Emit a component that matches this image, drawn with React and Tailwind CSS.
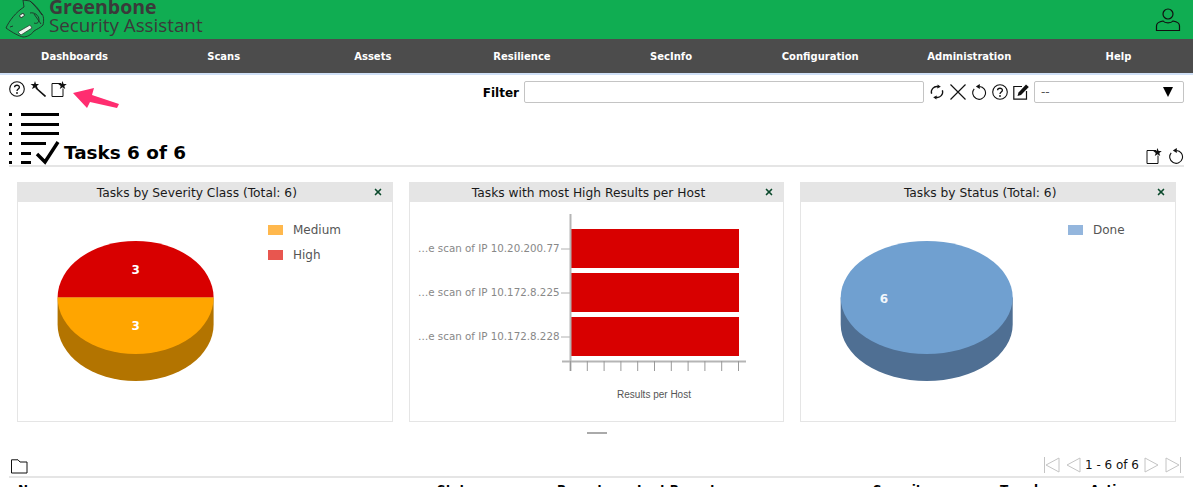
import React from 'react';
import { X } from 'lucide-react';

const NAV = ['Dashboards', 'Scans', 'Assets', 'Resilience', 'SecInfo', 'Configuration', 'Administration', 'Help'];

function Logo() {
  return (
    <svg width="46" height="39" viewBox="0 0 46 39" className="shrink-0" fill="none" stroke="#1f2f27" strokeWidth="0.9">
      <path d="M3 28 C6 21 13 12 21 7 L20 0 L27 1 C31 4 35 8 38 13 C41 15 41 21 40 25 C37 28 34 29 31 31 C28 35 24 37 20 37 C16 36 10 33 3 28 Z" fill="#17aa55" />
      <path d="M27 1 C31 5 35 9 39 15" />
      <path d="M27 13 C31 12 36 15 36 20 C36 23 33 24 31 23 M31 14 L38 24" />
      <ellipse cx="19" cy="15.5" rx="2.5" ry="1.6" transform="rotate(-35 19 15.5)" fill="#eef6ef" />
      <path d="M15 32 L27 25 L29 28 L18 35 Z" fill="#eef6ef" strokeWidth="0.7" />
      <path d="M7 27 L10 26" />
    </svg>
  );
}

function UserIcon() {
  return (
    <svg width="26" height="26" viewBox="0 0 26 26" fill="none" stroke="#111" strokeWidth="1.2">
      <circle cx="13" cy="8" r="5" />
      <path d="M1.5 24.5 V20 C1.5 17 5 15.5 8 15 C10 17.5 16 17.5 18 15 C21 15.5 24.5 17 24.5 20 V24.5 Z" />
    </svg>
  );
}

function HelpIcon() {
  return (
    <svg width="16" height="16" viewBox="0 0 16 16" fill="none" stroke="#111" strokeWidth="1.1">
      <circle cx="8" cy="8" r="7.3" />
      <path d="M5.6 6.2 C5.6 3.6 10.4 3.6 10.4 6.2 C10.4 8 8 8 8 10" strokeWidth="1.3" />
      <circle cx="8" cy="12" r="0.9" fill="#111" stroke="none" />
    </svg>
  );
}

function WandIcon() {
  return (
    <svg width="16" height="16" viewBox="0 0 16 16">
      <path d="M6 7 L15.5 15.5" stroke="#111" strokeWidth="1.6" />
      <path d="M5 0 L6 3 L9 3 L6.8 5 L8 8 L5 6.4 L2 8 L3.2 5 L0.5 3 L4 3 Z" fill="#111" />
    </svg>
  );
}

function NewIcon() {
  return (
    <svg width="16" height="16" viewBox="0 0 16 16" fill="none">
      <path d="M10 2.5 H1 V15.5 H12 V7.5" stroke="#111" strokeWidth="1" />
      <path d="M11.5 0 L12.6 3 L15.8 3 L13.3 5 L14.2 8 L11.5 6.2 L8.8 8 L9.7 5 L7.2 3 L10.4 3 Z" fill="#111" />
    </svg>
  );
}

function SyncIcon() {
  return (
    <svg width="16" height="16" viewBox="0 0 16 16" fill="none" stroke="#111" strokeWidth="1.3">
      <path d="M2.6 9.8 A5.6 5.6 0 0 1 9 2.6" />
      <path d="M13.4 6.2 A5.6 5.6 0 0 1 7 13.4" />
      <path d="M8.6 0.4 L11.8 2.8 L8.2 4.6 Z" fill="#111" stroke="none" />
      <path d="M7.4 15.6 L4.2 13.2 L7.8 11.4 Z" fill="#111" stroke="none" />
    </svg>
  );
}

function CrossIcon() {
  return (
    <svg width="16" height="16" viewBox="0 0 16 16" stroke="#111" strokeWidth="1.2">
      <path d="M0.5 0.5 L15.5 15.5 M15.5 0.5 L0.5 15.5" />
    </svg>
  );
}

function ResetIcon() {
  return (
    <svg width="16" height="16" viewBox="0 0 16 16" fill="none" stroke="#111" strokeWidth="1.1">
      <path d="M8.5 2.5 A6.4 6.4 0 1 1 3.2 4.8" />
      <path d="M8.8 0 L8.8 5 L4.8 2.4 Z" fill="#111" stroke="none" />
    </svg>
  );
}

function EditIcon() {
  return (
    <svg width="16" height="16" viewBox="0 0 16 16" fill="none">
      <path d="M9 2.5 H0.8 V15.2 H13.5 V7" stroke="#111" strokeWidth="1.2" />
      <path d="M13 0.5 L15.8 3 L8 11 L4.5 12 L5.5 8.5 Z" fill="#111" />
    </svg>
  );
}

function TasksIcon() {
  return (
    <svg width="52" height="53" viewBox="0 0 52 53" className="shrink-0" fill="#000">
      <rect x="0" y="1" width="3" height="3" />
      <rect x="0" y="11" width="3" height="3" />
      <rect x="0" y="20" width="3" height="3" />
      <rect x="0" y="30" width="3" height="3" />
      <rect x="0" y="40" width="3" height="3" />
      <rect x="0" y="49" width="3" height="3" />
      <rect x="12" y="1" width="38" height="3" />
      <rect x="12" y="11" width="38" height="3" />
      <rect x="12" y="20" width="38" height="3" />
      <rect x="12" y="30" width="25" height="3" />
      <rect x="12" y="40" width="10" height="3" />
      <rect x="12" y="49" width="10" height="3" />
      <path d="M28 42 L36 50 L49 30" fill="none" stroke="#000" strokeWidth="3.4" />
    </svg>
  );
}

function FolderIcon() {
  return (
    <svg width="17" height="15" viewBox="0 0 17 15" fill="none" stroke="#111" strokeWidth="1">
      <path d="M0.5 14 V0.8 H7 L9 3 H16 V14 Z" />
    </svg>
  );
}

function PageArrow({ dir, bar, className }) {
  return (
    <svg width="16" height="16" viewBox="0 0 16 16" fill="none" stroke="#c4c4c4" strokeWidth="1" className={className}>
      {dir === 'left' ? <path d="M15 1 L2 8 L15 15 Z" /> : <path d="M1 1 L14 8 L1 15 Z" />}
      {bar && (dir === 'left' ? <path d="M0.5 0 V16" /> : <path d="M15.5 0 V16" />)}
    </svg>
  );
}

function Pie({ cx, rx, top, side, label }) {
  const cy = 95.5;
  const ry = 56.5;
  const d = 27;
  return (
    <g>
      <path d={`M${cx - rx} ${cy} V${cy + d} A${rx} ${ry} 0 0 0 ${cx + rx} ${cy + d} V${cy} Z`} fill={side} />
      {top}
      {label}
    </g>
  );
}

function Panel({ title, children }) {
  return (
    <div className="relative h-[240px] border border-[#e5e5e5] bg-white">
      <div className="relative h-[19px] bg-[#e5e5e5] pr-[16px] pt-[1px] text-center text-[12.25px] leading-[19px] text-[#1a1a1a]">
        {title}
        <X size={10} strokeWidth={4} className="absolute right-[9px] top-[4px] text-[#0b4a2c]" />
      </div>
      {children}
    </div>
  );
}

function Legend({ x, color, y, children }) {
  return (
    <g>
      <rect x={x} y={y} width="15" height="10" fill={color} />
      <text x={x + 25} y={y + 8.5} fontSize="12" fill="#555">{children}</text>
    </g>
  );
}

function SeverityChart() {
  const cx = 117.6;
  const rx = 78;
  const top = (
    <g>
      <path d={`M${cx - rx} 95.5 A${rx} 56.5 0 0 1 ${cx + rx} 95.5 Z`} fill="#d80000" />
      <path d={`M${cx - rx} 95.5 A${rx} 56.5 0 0 0 ${cx + rx} 95.5 Z`} fill="#ffa500" />
    </g>
  );
  const label = (
    <g fontSize="12" fontWeight="700" fill="#fff" textAnchor="middle">
      <text x={cx} y="72">3</text>
      <text x={cx} y="128">3</text>
    </g>
  );
  return (
    <svg width="374" height="219" viewBox="0 0 374 219" className="block">
      <Pie cx={cx} rx={rx} side="#b37400" top={top} label={label} />
      <Legend x={250} y={23} color="#ffb84d">Medium</Legend>
      <Legend x={250} y={48} color="#e8564f">High</Legend>
    </svg>
  );
}

function StatusChart() {
  const cx = 125.7;
  const rx = 86;
  const top = <ellipse cx={cx} cy="95.5" rx={rx} ry="56.5" fill="#70a0d0" />;
  const label = <text x="83" y="100.5" fontSize="12" fontWeight="700" fill="#f2f6fb" textAnchor="middle">6</text>;
  return (
    <svg width="374" height="219" viewBox="0 0 374 219" className="block">
      <Pie cx={cx} rx={rx} side="#4f6f93" top={top} label={label} />
      <Legend x={267} y={23} color="#94b6dd">Done</Legend>
    </svg>
  );
}

function BarsChart() {
  const rows = [
    { y: 27, label: '…e scan of IP 10.20.200.77' },
    { y: 71, label: '…e scan of IP 10.172.8.225' },
    { y: 115, label: '…e scan of IP 10.172.8.228' },
  ];
  const ticks = Array.from({ length: 11 }, (_, i) => 160.5 + i * 16.8);
  return (
    <svg width="374" height="219" viewBox="0 0 374 219" className="block">
      {rows.map((r) => (
        <g key={r.y}>
          <rect x="161" y={r.y} width="168" height="39" fill="#d80000" />
          <path d={`M151 ${r.y + 20} H160`} stroke="#b0b0b0" strokeWidth="1" />
          <text x="149.5" y={r.y + 23} fontSize="10.3" fill="#888" textAnchor="end">{r.label}</text>
        </g>
      ))}
      <path d="M160.5 12 V169" stroke="#b5b5b5" strokeWidth="2" />
      <path d="M152 159.5 H336" stroke="#b5b5b5" strokeWidth="2" />
      {ticks.map((x) => (
        <path key={x} d={`M${x} 159 V169`} stroke="#999" strokeWidth="1" />
      ))}
      <text x="244" y="196" fontSize="10" fill="#555" textAnchor="middle" fontFamily="'Liberation Sans', sans-serif">Results per Host</text>
    </svg>
  );
}

export default function App() {
  return (
    <div className="relative h-[487px] w-[1193px] overflow-hidden bg-white font-['DejaVu_Sans',sans-serif] text-black">
      <header className="flex h-[39px] items-start justify-between overflow-hidden bg-[#10ad52] pl-[3px] pr-[12px]">
        <div className="flex items-start">
          <Logo />
          <div className="font-['Open_Sans',sans-serif] text-[#3a3a3a]">
            <div className="text-[19.5px] font-bold leading-[14px]">Greenbone</div>
            <div className="mt-[1px] text-[18.8px] leading-[20px]">Security Assistant</div>
          </div>
        </div>
        <div className="mt-[6px]"><UserIcon /></div>
      </header>

      <nav className="grid h-[36px] grid-cols-8 border-b-2 border-[#cfe0f7] bg-[#4c4c4c] text-center text-[10px] font-bold leading-[36px] text-white">
        {NAV.map((item) => (
          <div key={item}>{item}</div>
        ))}
      </nav>

      <div className="flex h-[37px] items-start justify-between pl-[9px] pr-[9px] pt-[6px]">
        <div className="flex gap-[5px]">
          <HelpIcon />
          <WandIcon />
          <NewIcon />
        </div>
        <div className="flex items-center">
          <span className="mr-[5px] mt-[2px] text-[12px] font-bold">Filter</span>
          <input className="h-[22px] w-[400px] rounded-[2px] border border-[#c4c4c4] bg-white outline-none" />
          <div className="ml-[5px] flex gap-[5px]">
            <SyncIcon />
            <CrossIcon />
            <ResetIcon />
            <HelpIcon />
            <EditIcon />
          </div>
          <div className="ml-[5px] flex h-[22px] w-[150px] items-center justify-between rounded-[2px] border border-[#c4c4c4] pl-[6px] pr-[10px] text-[12px] text-[#555]">
            <span>--</span>
            <span className="h-0 w-0 border-x-[5px] border-t-[10px] border-x-transparent border-t-black" />
          </div>
        </div>
      </div>

      <div className="mx-[9px] flex h-[55px] items-end border-b-2 border-[#e5e5e5]">
        <TasksIcon />
        <h1 className="mb-[1px] ml-[3px] text-[18.4px] font-bold leading-[22px]">Tasks 6 of 6</h1>
        <div className="mb-[1px] ml-auto flex gap-[6px]">
          <NewIcon />
          <ResetIcon />
        </div>
      </div>

      <div className="mx-[17px] mt-[15px] grid w-[1159px] grid-cols-3 gap-4">
        <Panel title="Tasks by Severity Class (Total: 6)"><SeverityChart /></Panel>
        <Panel title="Tasks with most High Results per Host"><BarsChart /></Panel>
        <Panel title="Tasks by Status (Total: 6)"><StatusChart /></Panel>
      </div>

      <div className="mx-auto mt-[10px] h-[2px] w-[20px] bg-[#aaaaaa]" />

      <div className="mx-[9px] flex h-[44px] items-end justify-between border-b-2 border-[#e5e5e5] pb-[2px] pl-[2px]">
        <FolderIcon />
        <div className="flex items-center pr-[3px] text-[12px] text-[#111]">
          <PageArrow dir="left" bar />
          <PageArrow dir="left" className="ml-[5px]" />
          <span className="ml-[4px]">1 - 6 of 6</span>
          <PageArrow dir="right" className="ml-[5px]" />
          <PageArrow dir="right" bar className="ml-[5px]" />
        </div>
      </div>

      <div className="flex pl-[18px] pt-[5px] text-[12px] font-bold leading-[14px]">
        <div className="w-[419px]">Name</div>
        <div className="w-[120px]">Status</div>
        <div className="w-[80px]">Reports</div>
        <div className="w-[236px]">Last Report</div>
        <div className="w-[127px]">Severity</div>
        <div className="w-[90px]">Trend</div>
        <div>Actions</div>
      </div>

      {/* annotation arrow pointing at the new task icon */}
      <svg width="50" height="26" viewBox="0 0 50 26" className="absolute left-[72px] top-[85px]">
        <path d="M1 8 L22 3 L20 10 L47 19 L45 23 L18 17 L15 23 Z" fill="#ff2d70" />
      </svg>
    </div>
  );
}
